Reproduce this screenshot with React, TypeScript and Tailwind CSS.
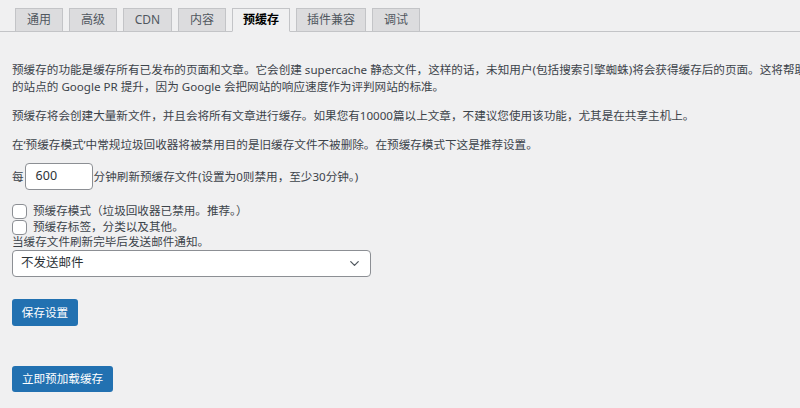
import { ChevronDown } from "lucide-react";

const tabs = ["通用", "高级", "CDN", "内容", "预缓存", "插件兼容", "调试"];
const tabWidths = ["w-[48px]", "w-[48px]", "w-[49px]", "w-[48px]", "w-[58px]", "w-[70px]", "w-[48px]"];

const font = "font-['Noto_Sans','Noto_Sans_CJK_SC',sans-serif]";

export default function App() {
  return (
    <div className={`h-[408px] w-[800px] overflow-hidden bg-[#f0f0f1] text-[11.6px] text-[#3c434a] ${font}`}>
      <div className="flex gap-[6px] border-b border-[#c3c4c7] pl-[15px] pt-[8px]">
        {tabs.map((t, i) => (
          <div
            key={t}
            className={`${tabWidths[i]} -mb-px flex h-[24px] items-center justify-center border border-[#c3c4c7] text-[12px] ${
              i === 4
                ? "border-b-[#f0f0f1] bg-[#f0f0f1] font-semibold text-black"
                : "bg-[#dcdcde] text-[#50575e]"
            }`}
          >
            {t}
          </div>
        ))}
      </div>

      <div className="px-[12px] pt-[29px]">
        <p className="whitespace-nowrap leading-[17px]">
          预缓存的功能是缓存所有已发布的页面和文章。它会创建 supercache 静态文件，这样的话，未知用户(包括搜索引擎蜘蛛)将会获得缓存后的页面。这将帮助你
          <br />
          的站点的 Google PR 提升，因为 Google 会把网站的响应速度作为评判网站的标准。
        </p>
        <p className="mt-[12px] leading-[17px]">
          预缓存将会创建大量新文件，并且会将所有文章进行缓存。如果您有10000篇以上文章，不建议您使用该功能，尤其是在共享主机上。
        </p>
        <p className="mt-[12px] leading-[17px]">
          在‘预缓存模式’中常规垃圾回收器将被禁用目的是旧缓存文件不被删除。在预缓存模式下这是推荐设置。
        </p>

        <div className="mt-[10px] flex items-center">
          <span>每</span>
          <div className="ml-[1px] flex h-[27px] w-[68px] items-center rounded-[4px] border border-[#8c8f94] bg-white pl-[10px] text-[12.5px] text-[#2c3338]">
            600
          </div>
          <span className="ml-[1px]">分钟刷新预缓存文件(设置为0则禁用，至少30分钟。)</span>
        </div>

        <div className="mt-[13px] flex h-[16px] items-center">
          <span className="h-[15px] w-[15px] rounded-[4px] border border-[#8c8f94] bg-white" />
          <span className="ml-[6px]">预缓存模式（垃圾回收器已禁用。推荐。）</span>
        </div>
        <div className="flex h-[16px] items-center">
          <span className="h-[15px] w-[15px] rounded-[4px] border border-[#8c8f94] bg-white" />
          <span className="ml-[6px]">预缓存标签，分类以及其他。</span>
        </div>
        <div className="h-[14px] leading-[14px]">当缓存文件刷新完毕后发送邮件通知。</div>

        <div className="mt-[1px] flex h-[27px] w-[359px] items-center justify-between rounded-[4px] border border-[#8c8f94] bg-white pl-[8px] pr-[8px] text-[12.5px] text-[#2c3338]">
          <span>不发送邮件</span>
          <ChevronDown size={15} strokeWidth={2} className="text-[#50575e]" />
        </div>

        <button className="mt-[22px] flex h-[27px] w-[66px] items-center justify-center rounded-[3px] bg-[#2271b1] text-[11.6px] text-white">
          保存设置
        </button>

        <button className="mt-[40px] flex h-[26px] w-[101px] items-center justify-center rounded-[3px] bg-[#2271b1] text-[11.6px] text-white">
          立即预加载缓存
        </button>
      </div>
    </div>
  );
}
